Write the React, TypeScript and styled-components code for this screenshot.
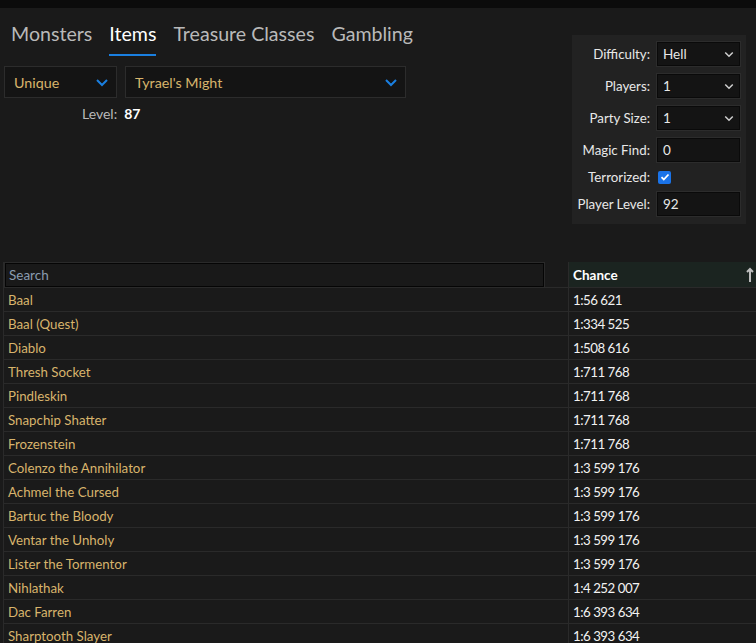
import styled, { createGlobalStyle } from "styled-components";

const GlobalStyle = createGlobalStyle`
  html, body {
    margin: 0;
    padding: 0;
    background: #1a1a1a;
    font-family: "Lato", "Noto Sans", sans-serif;
    color: #e8e8e8;
    overflow: hidden;
  }
  * { box-sizing: border-box; }
`;

const Page = styled.div`
  width: 756px;
  height: 643px;
  overflow: hidden;
  background: #1a1a1a;
`;

const TopBar = styled.div`
  height: 8px;
  background: #0b0b0b;
`;

const Header = styled.div`
  display: flex;
  justify-content: space-between;
  align-items: flex-start;
  height: 254px;
`;

const LeftCol = styled.div`
  display: flex;
  flex-direction: column;
`;

const Tabs = styled.div`
  display: flex;
  gap: 17px;
  padding: 14px 0 0 11px;
`;

const Tab = styled.div<{ $active?: boolean }>`
  font-size: 19.6px;
  line-height: 24px;
  padding-bottom: 8px;
  color: ${(p) => (p.$active ? "#ffffff" : "#b9b9b9")};
  border-bottom: 2px solid ${(p) => (p.$active ? "#1a7fe0" : "transparent")};
`;

const SelectRow = styled.div`
  display: flex;
  gap: 8px;
  padding: 10px 0 0 4px;
`;

const FakeSelect = styled.div<{ $width: number }>`
  width: ${(p) => p.$width}px;
  height: 32px;
  display: flex;
  align-items: center;
  justify-content: space-between;
  padding: 0 6px 0 9px;
  background: #141414;
  border: 1px solid #2c2c2c;
  color: #d8b46c;
  font-size: 14.3px;
`;

const LevelRow = styled.div`
  display: flex;
  gap: 7px;
  padding: 7px 0 0 82px;
  font-size: 14px;
  line-height: 18px;
`;

const LevelLabel = styled.span`
  color: #b9b9b9;
`;

const LevelValue = styled.span`
  color: #ffffff;
  font-weight: 700;
`;

const Panel = styled.div`
  margin: 27px 10px 0 0;
  width: 174px;
  background: #222222;
  padding: 6px 5px 7px 5px;
  display: grid;
  grid-template-columns: minmax(0, 1fr) 85px;
  column-gap: 6px;
  row-gap: 6px;
  align-items: center;
`;

const PanelLabel = styled.label`
  text-align: right;
  font-size: 13.3px;
  color: #e8e8e8;
  white-space: nowrap;
`;

const PanelField = styled.div`
  height: 26px;
  background: #141414;
  border: 1px solid #2c2c2c;
  box-shadow: inset 0 0 0 1px #0a0a0a;
  display: flex;
  align-items: center;
  justify-content: space-between;
  padding: 0 5px 0 6px;
  font-size: 13.5px;
  color: #e8e8e8;
`;

const CheckCell = styled.div`
  height: 16px;
  display: flex;
  align-items: center;
`;

const CheckBox = styled.span`
  width: 13px;
  height: 13px;
  border-radius: 2px;
  background: #1a73e8;
  display: flex;
  align-items: center;
  justify-content: center;
  margin-left: 2px;
`;

const Table = styled.div`
  margin-left: 3px;
  border-left: 1px solid #2a2a2a;
  display: grid;
  grid-template-columns: 565px 1fr;
`;

const HeadSearchCell = styled.div`
  height: 26px;
  padding: 1px 24px 1px 1px;
  border-bottom: 1px solid #2a2a2a;
  border-right: 1px solid #2a2a2a;
`;

const SearchBox = styled.div`
  height: 24px;
  border: 1px solid #050505;
  outline: 1px solid #2a2a2a;
  background: #191919;
  display: flex;
  align-items: center;
  padding-left: 3px;
  font-size: 13.5px;
  color: #8a9cb0;
`;

const HeadChance = styled.div`
  height: 26px;
  background: #1b2420;
  border-bottom: 1px solid #2a2a2a;
  display: flex;
  align-items: center;
  justify-content: space-between;
  padding: 0 0 0 4px;
  font-size: 13.5px;
  font-weight: 700;
  color: #ffffff;
`;

const Cell = styled.div<{ $name?: boolean }>`
  height: 24px;
  display: flex;
  align-items: center;
  padding: 1px 0 0 4px;
  font-size: 13.3px;
  border-bottom: 1px solid #2a2a2a;
  color: ${(p) => (p.$name ? "#d8b46c" : "#f2f2f2")};
  border-right: ${(p) => (p.$name ? "1px solid #2a2a2a" : "none")};
  letter-spacing: ${(p) => (p.$name ? "0" : "-0.5px")};
`;

const Chevron = ({ color, size }: { color: string; size: number }) => (
  <svg width={size} height={size} viewBox="0 0 16 16">
    <path d="M3 6l5 5 5-5" fill="none" stroke={color} strokeWidth="2" />
  </svg>
);

const rows: [string, string][] = [
  ["Baal", "1:56 621"],
  ["Baal (Quest)", "1:334 525"],
  ["Diablo", "1:508 616"],
  ["Thresh Socket", "1:711 768"],
  ["Pindleskin", "1:711 768"],
  ["Snapchip Shatter", "1:711 768"],
  ["Frozenstein", "1:711 768"],
  ["Colenzo the Annihilator", "1:3 599 176"],
  ["Achmel the Cursed", "1:3 599 176"],
  ["Bartuc the Bloody", "1:3 599 176"],
  ["Ventar the Unholy", "1:3 599 176"],
  ["Lister the Tormentor", "1:3 599 176"],
  ["Nihlathak", "1:4 252 007"],
  ["Dac Farren", "1:6 393 634"],
  ["Sharptooth Slayer", "1:6 393 634"],
];

const settings: { label: string; value: string; select?: boolean }[] = [
  { label: "Difficulty:", value: "Hell", select: true },
  { label: "Players:", value: "1", select: true },
  { label: "Party Size:", value: "1", select: true },
  { label: "Magic Find:", value: "0" },
];

export default function App() {
  return (
    <Page>
      <GlobalStyle />
      <TopBar />
      <Header>
        <LeftCol>
          <Tabs>
            <Tab>Monsters</Tab>
            <Tab $active>Items</Tab>
            <Tab>Treasure Classes</Tab>
            <Tab>Gambling</Tab>
          </Tabs>
          <SelectRow>
            <FakeSelect $width={113}>
              Unique
              <Chevron color="#1a7fe0" size={16} />
            </FakeSelect>
            <FakeSelect $width={281}>
              Tyrael's Might
              <Chevron color="#1a7fe0" size={16} />
            </FakeSelect>
          </SelectRow>
          <LevelRow>
            <LevelLabel>Level:</LevelLabel>
            <LevelValue>87</LevelValue>
          </LevelRow>
        </LeftCol>
        <Panel>
          {settings.map((s) => (
            <>
              <PanelLabel key={s.label}>{s.label}</PanelLabel>
              <PanelField key={s.label + "f"}>
                {s.value}
                {s.select && <Chevron color="#d0d0d0" size={12} />}
              </PanelField>
            </>
          ))}
          <PanelLabel>Terrorized:</PanelLabel>
          <CheckCell>
            <CheckBox>
              <svg width="10" height="10" viewBox="0 0 10 10">
                <path d="M1.5 5.2l2.3 2.3L8.5 2.5" fill="none" stroke="#fff" strokeWidth="1.8" />
              </svg>
            </CheckBox>
          </CheckCell>
          <PanelLabel>Player Level:</PanelLabel>
          <PanelField>92</PanelField>
        </Panel>
      </Header>
      <Table>
        <HeadSearchCell>
          <SearchBox>Search</SearchBox>
        </HeadSearchCell>
        <HeadChance>
          Chance
          <svg width="8" height="16" viewBox="0 0 8 16" style={{ marginRight: 2 }}>
            <path d="M4 15V3M1 5l3-3 3 3" fill="none" stroke="#bdbdbd" strokeWidth="2" />
          </svg>
        </HeadChance>
        {rows.map(([n, c]) => (
          <>
            <Cell $name key={n}>{n}</Cell>
            <Cell key={n + "c"}>{c}</Cell>
          </>
        ))}
      </Table>
    </Page>
  );
}
